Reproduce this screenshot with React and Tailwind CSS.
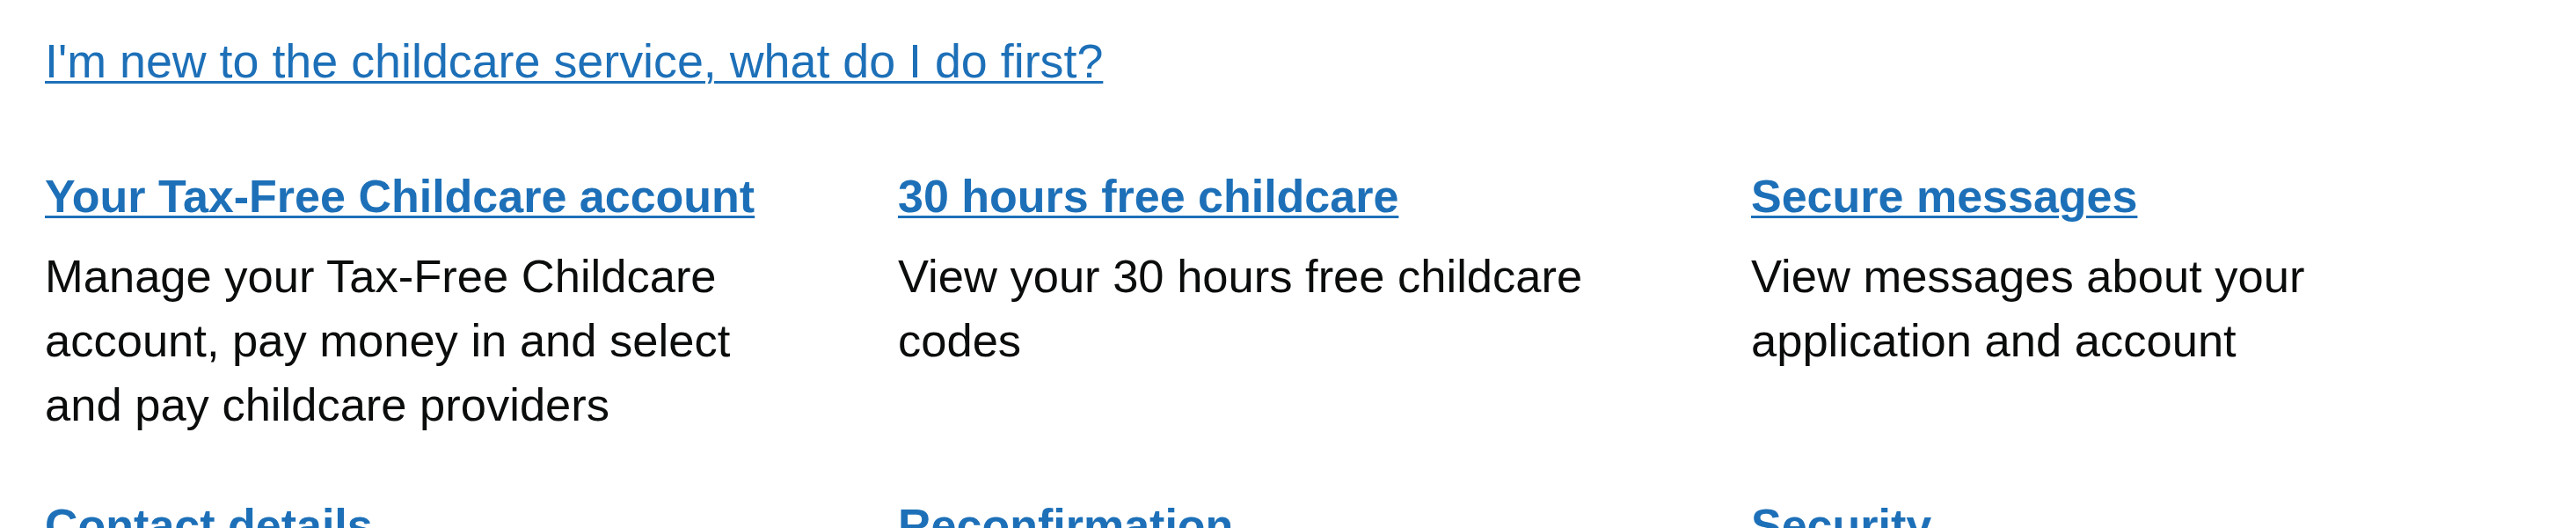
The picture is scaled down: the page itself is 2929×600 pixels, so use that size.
const CARDS = [
  {
    title: 'Your Tax-Free Childcare account',
    description: 'Manage your Tax-Free Childcare account, pay money in and select and pay childcare providers',
  },
  {
    title: '30 hours free childcare',
    description: 'View your 30 hours free childcare codes',
  },
  {
    title: 'Secure messages',
    description: 'View messages about your application and account',
  },
  {
    title: 'Contact details',
    description: 'View and update your contact details',
  },
  {
    title: 'Reconfirmation',
    description: 'Reconfirm your eligibility',
  },
  {
    title: 'Security',
    description: 'Change your password and security details',
  },
];

const FONT = "font-['Liberation_Sans',Arial,sans-serif]";

function Card({ card }) {
  return (
    <div className="max-w-[830px]">
      <h2 className="m-0 text-[52px] leading-[73px] font-bold">
        <a
          href="#"
          className="text-[#1d70b8] underline decoration-[3px] underline-offset-[4px]"
        >
          {card.title}
        </a>
      </h2>
      <p className="mt-[17px] text-[52.5px] leading-[73px] text-[#0b0c0c]">{card.description}</p>
    </div>
  );
}

export default function App() {
  return (
    <div className={`${FONT} bg-white min-h-screen pl-[51px] pt-[33px]`}>
      <p className="text-[53.8px] leading-[73px]">
        <a
          href="#"
          className="text-[#1d70b8] underline decoration-[3px] underline-offset-[4px]"
        >
          I'm new to the childcare service, what do I do first?
        </a>
      </p>
      <div className="mt-[81px] grid grid-cols-[970px_970px_1fr] gap-y-[65px]">
        {CARDS.map((card, i) => (
          <Card key={i} card={card} />
        ))}
      </div>
    </div>
  );
}
